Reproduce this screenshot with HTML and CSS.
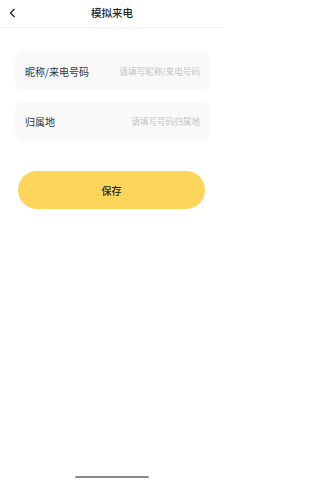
FILE: index.html
```html
<!DOCTYPE html>
<html lang="zh">
<head>
<meta charset="utf-8">
<meta name="viewport" content="width=224">
<link rel="stylesheet" href="styles.css">
</head>
<body>
<div class="page">
  <header class="nav">
    <svg class="back" width="7" height="10" viewBox="0 0 7 10"><path d="M5.5 1 L1.5 5 L5.5 9" fill="none" stroke="#222" stroke-width="1.3"/></svg>
    <div class="title">模拟来电</div>
  </header>
  <main class="content">
    <div class="field">
      <span class="label">昵称/来电号码</span>
      <span class="placeholder">请填写昵称/来电号码</span>
    </div>
    <div class="field">
      <span class="label">归属地</span>
      <span class="placeholder">请填写号码归属地</span>
    </div>
    <div class="btn">保存</div>
  </main>
  <div class="home-bar"></div>
</div>
</body>
</html>
```
FILE: styles.css
```css
* { box-sizing: border-box; }
html, body { margin: 0; padding: 0; background: #fff; }
body { font-family: "Noto Sans CJK SC", "Noto Sans", sans-serif; }
.page { width: 224px; height: 480px; display: flex; flex-direction: column; overflow: hidden; }
.nav {
  height: 28px;
  border-bottom: 1px solid #f3f3f3;
  display: flex; align-items: center; justify-content: center;
  position: relative;
}
.back { position: absolute; left: 9px; top: 8px; }
.title { font-size: 10.5px; font-weight: 500; color: #222; line-height: 1; margin-top: -1px; }
.content { padding: 24px 14px 0 15px; display: flex; flex-direction: column; gap: 12px; }
.field {
  height: 38px;
  background: #f9f9f9;
  border-radius: 8px;
  display: flex; align-items: center; justify-content: space-between;
  padding: 0 10px 0 10px;
}
.label { font-size: 10px; color: #333; }
.placeholder { font-size: 8.6px; color: #c4c4c4; }
.btn {
  margin: 19px 5px 0 3px;
  height: 38px;
  border-radius: 19px;
  background: #fcd55a;
  display: flex; align-items: center; justify-content: center;
  font-size: 10px; font-weight: 500; color: #222;
}
.home-bar {
  margin: auto auto 2px auto;
  width: 74px; height: 2px;
  background: #8a8a8a; border-radius: 1px;
}
```
